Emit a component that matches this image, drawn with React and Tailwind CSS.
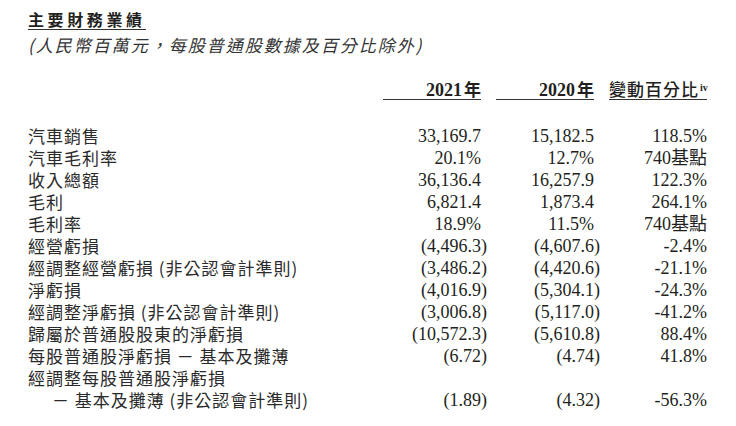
import React from 'react';

// Key financial results table (RMB millions)
const rows = [
  { label: '汽車銷售', y21: '33,169.7', y20: '15,182.5', chg: '118.5%' },
  { label: '汽車毛利率', y21: '20.1%', y20: '12.7%', chg: '740基點' },
  { label: '收入總額', y21: '36,136.4', y20: '16,257.9', chg: '122.3%' },
  { label: '毛利', y21: '6,821.4', y20: '1,873.4', chg: '264.1%' },
  { label: '毛利率', y21: '18.9%', y20: '11.5%', chg: '740基點' },
  { label: '經營虧損', y21: '(4,496.3)', y20: '(4,607.6)', chg: '-2.4%' },
  { label: '經調整經營虧損 (非公認會計準則)', y21: '(3,486.2)', y20: '(4,420.6)', chg: '-21.1%' },
  { label: '淨虧損', y21: '(4,016.9)', y20: '(5,304.1)', chg: '-24.3%' },
  { label: '經調整淨虧損 (非公認會計準則)', y21: '(3,006.8)', y20: '(5,117.0)', chg: '-41.2%' },
  { label: '歸屬於普通股股東的淨虧損', y21: '(10,572.3)', y20: '(5,610.8)', chg: '88.4%' },
  { label: '每股普通股淨虧損 － 基本及攤薄', y21: '(6.72)', y20: '(4.74)', chg: '41.8%' },
  { label: '經調整每股普通股淨虧損', y21: '', y20: '', chg: '' },
  { label: '－ 基本及攤薄 (非公認會計準則)', y21: '(1.89)', y20: '(4.32)', chg: '-56.3%', indent: true },
];

const cjk = "font-['Noto_Sans_CJK_TC','Noto_Sans_CJK_SC',sans-serif]";
const serif = "font-['Liberation_Serif','Noto_Sans_CJK_TC',serif]";

// closing bracket hangs past the column edge, accounting style
const Num = ({ value }) => {
  if (value.startsWith('(')) {
    return (
      <>
        {value.slice(0, -1)}
        <span className="mr-[-6px]">)</span>
      </>
    );
  }
  return value;
};

export default function App() {
  return (
    <div className="w-[736px] h-[426px] bg-white text-[#231f20] pl-[28px] pr-[29px] pt-[10px] overflow-hidden">
      <div className={`${cjk} w-fit h-[19.5px] text-[16px] leading-[18px] font-bold tracking-[3.6px] border-b-[1.5px] border-[#333]`}>
        主要財務業績
      </div>
      <div className={`${cjk} mt-[4px] h-[22px] text-[17px] leading-[22px] italic tracking-[2px] text-[#333] whitespace-nowrap`}>
        (人民幣百萬元，每股普通股數據及百分比除外)
      </div>

      <div className="grid grid-cols-[1fr_98px_98px_98px] gap-x-[15px] mt-[22px]">
        <div />
        <div className="h-[22px] text-right leading-[21px] border-b border-[#333] whitespace-nowrap">
          <span className={`${serif} text-[18px] font-bold`}>2021</span>
          <span className={`${cjk} text-[17px] font-bold ml-[2px]`}>年</span>
        </div>
        <div className="h-[22px] text-right leading-[21px] border-b border-[#333] whitespace-nowrap">
          <span className={`${serif} text-[18px] font-bold`}>2020</span>
          <span className={`${cjk} text-[17px] font-bold ml-[2px]`}>年</span>
        </div>
        <div className="h-[22px] text-right leading-[21px] border-b border-[#333] whitespace-nowrap">
          <span className={`${cjk} text-[17px] font-medium tracking-[1px]`}>變動百分比</span>
          <sup className={`${serif} text-[10px] font-bold ml-[1px]`}>iv</sup>
        </div>
      </div>

      <div className="grid grid-cols-[1fr_98px_98px_98px] gap-x-[15px] mt-[25px]">
        {rows.map((r) => (
          <React.Fragment key={r.label}>
            <div className={`${cjk} h-[22px] text-[17px] leading-[22px] tracking-[1px] whitespace-nowrap text-[#2a2a2a] ${r.indent ? 'pl-[24px]' : ''}`}>
              {r.label}
            </div>
            <div className={`${serif} h-[22px] text-[18px] leading-[22px] text-right whitespace-nowrap`}>
              <Num value={r.y21} />
            </div>
            <div className={`${serif} h-[22px] text-[18px] leading-[22px] text-right whitespace-nowrap`}>
              <Num value={r.y20} />
            </div>
            <div className={`${serif} h-[22px] text-[18px] leading-[22px] text-right whitespace-nowrap`}>
              {r.chg}
            </div>
          </React.Fragment>
        ))}
      </div>
    </div>
  );
}
